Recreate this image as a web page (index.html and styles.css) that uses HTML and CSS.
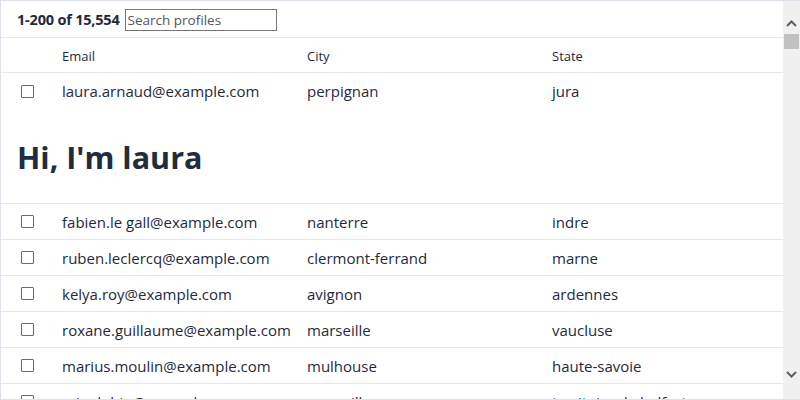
FILE: index.html
```html
<!DOCTYPE html>
<html>
<head>
<meta charset="utf-8">
<link rel="stylesheet" href="styles.css">
</head>
<body>
<div class="frame">
  <div class="content">
    <div class="toolbar">
      <span class="count">1-200 of 15,554</span>
      <input class="search" type="text" placeholder="Search profiles">
    </div>
    <table class="grid">
      <colgroup><col class="c-check"><col class="c-col"><col class="c-col"><col></colgroup>
      <thead>
        <tr><th></th><th>Email</th><th>City</th><th>State</th></tr>
      </thead>
      <tbody>
        <tr class="first"><td><span class="box"></span></td><td>laura.arnaud@example.com</td><td>perpignan</td><td>jura</td></tr>
        <tr class="hero"><td colspan="4"><h1>Hi, I'm laura</h1></td></tr>
        <tr><td><span class="box"></span></td><td>fabien.le gall@example.com</td><td>nanterre</td><td>indre</td></tr>
        <tr><td><span class="box"></span></td><td>ruben.leclercq@example.com</td><td>clermont-ferrand</td><td>marne</td></tr>
        <tr><td><span class="box"></span></td><td>kelya.roy@example.com</td><td>avignon</td><td>ardennes</td></tr>
        <tr><td><span class="box"></span></td><td>roxane.guillaume@example.com</td><td>marseille</td><td>vaucluse</td></tr>
        <tr><td><span class="box"></span></td><td>marius.moulin@example.com</td><td>mulhouse</td><td>haute-savoie</td></tr>
        <tr><td><span class="box"></span></td><td>mia.dubin@example.com</td><td>marseille</td><td>territoire de belfort</td></tr>
      </tbody>
    </table>
  </div>
  <div class="scrollbar">
    <svg class="arrow" width="17" height="17" viewBox="0 0 17 17"><path d="M4 11 L8.5 6.5 L13 11" fill="none" stroke="#606060" stroke-width="2"/></svg>
    <div class="thumb"></div>
    <div class="track"></div>
    <svg class="arrow" width="17" height="17" viewBox="0 0 17 17"><path d="M4 6 L8.5 10.5 L13 6" fill="none" stroke="#606060" stroke-width="2"/></svg>
  </div>
</div>
</body>
</html>
```

FILE: styles.css
```css
* { box-sizing: border-box; }
html, body { margin: 0; padding: 0; }
body {
  font-family: "Open Sans", "Noto Sans", sans-serif;
  color: #1f2a3c;
  background: #fff;
}
.frame {
  width: 800px;
  height: 400px;
  display: flex;
  border-left: 1px solid #dde3ea;
  border-top: 1px solid #dde3ea;
  border-bottom: 1px solid #dde3ea;
  overflow: hidden;
}
.content {
  flex: 1;
  min-width: 0;
  overflow: hidden;
}
.toolbar {
  height: 37px;
  display: flex;
  align-items: center;
  padding-left: 16px;
  padding-top: 1px;
  gap: 5px;
  border-bottom: 1px solid #e5e8ec;
}
.count {
  font-weight: 700;
  font-size: 14.5px;
  letter-spacing: -0.2px;
}
.search {
  width: 152px;
  height: 22px;
  border: 1px solid #767676;
  padding: 0 2px;
  font-family: inherit;
  font-size: 13.5px;
  color: #1f2a3c;
  margin: 0;
}
.search::placeholder { color: #555; }
.grid {
  width: 100%;
  border-collapse: collapse;
  table-layout: fixed;
}
.c-check { width: 61px; }
.c-col { width: 245px; }
.grid th {
  text-align: left;
  font-weight: 400;
  font-size: 13px;
  height: 34px;
  padding: 2px 0 0 0;
  border-bottom: 1px solid #e5e8ec;
}
.grid td {
  font-size: 15px;
  height: 36px;
  padding: 1px 0 0 0;
  white-space: nowrap;
  border-bottom: 1px solid #e5e8ec;
  vertical-align: middle;
}
.grid tr.first td { border-bottom: none; height: 37px; }
.grid td:first-child { padding-left: 20px; }
.box {
  display: block;
  width: 13px;
  height: 13px;
  border: 1px solid #6b6b6b;
  background: #fff;
  border-radius: 1px;
}
.grid tr.hero td {
  height: 94px;
  padding-left: 16px;
  padding-top: 2px;
}
.hero h1 {
  margin: 0;
  font-size: 30.5px;
  font-weight: 700;
  color: #222c3f;
}
.scrollbar {
  width: 17px;
  flex: none;
  background: #f0f0f0;
  display: flex;
  flex-direction: column;
  padding-top: 14px;
}
.arrow { display: block; flex: none; }
.thumb {
  height: 15px;
  margin: 2px 1px 0 1px;
  background: #c1c1c1;
}
.track { flex: 1; }
.scrollbar .arrow:last-child { margin-bottom: 16px; }
```
